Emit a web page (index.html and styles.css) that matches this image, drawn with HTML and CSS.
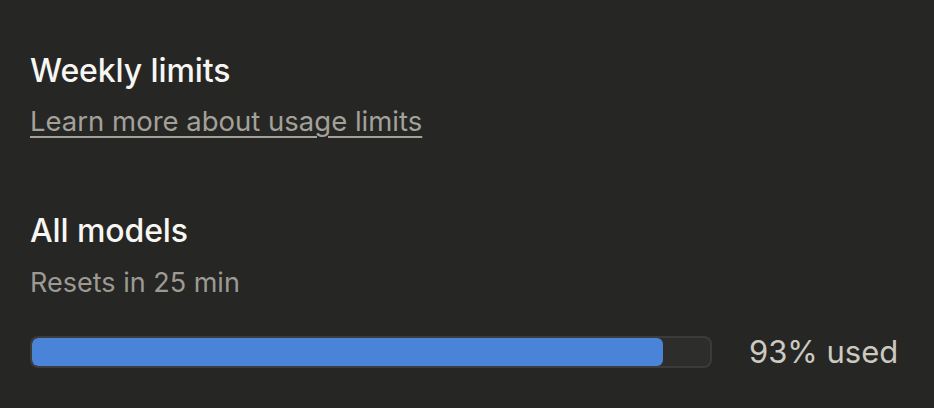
FILE: index.html
```html
<!DOCTYPE html>
<html>
<head>
<meta charset="utf-8">
<link rel="stylesheet" href="styles.css">
</head>
<body>
<main class="panel">
  <section class="section">
    <h2 class="title">Weekly limits</h2>
    <a class="link" href="#">Learn more about usage limits</a>
  </section>
  <section class="section models">
    <h3 class="title">All models</h3>
    <p class="sub">Resets in 25 min</p>
    <div class="usage">
      <div class="track"><div class="fill" style="width:631px"></div></div>
      <span class="pct">93% used</span>
    </div>
  </section>
</main>
</body>
</html>
```
FILE: styles.css
```css
html, body {
  margin: 0;
  padding: 0;
  background: #262624;
  width: 934px;
  height: 408px;
  overflow: hidden;
}
.panel {
  padding: 51px 30px 0 30px;
  font-family: Inter, "Noto Sans", sans-serif;
}
.section { display: flex; flex-direction: column; align-items: flex-start; }
.title {
  margin: 0;
  font-size: 32px;
  font-weight: 500;
  color: #f7f6f2;
  line-height: 40px;
  letter-spacing: -0.1px;
}
.link {
  margin-top: 12px;
  font-size: 27.5px;
  line-height: 36px;
  color: #a3a19a;
  text-decoration: underline;
  text-underline-offset: 5px;
  text-decoration-thickness: 2px;
}
.models { margin-top: 72px; }
.sub {
  margin: 14px 0 0;
  font-size: 27px;
  line-height: 36px;
  color: #9c9a93;
}
.usage {
  margin-top: 32px;
  display: flex;
  align-items: center;
  gap: 37px;
}
.track {
  width: 682px;
  height: 32px;
  box-sizing: border-box;
  border: 2px solid #3b3b39;
  border-radius: 8px;
  background: #2d2d2b;
  overflow: hidden;
  padding: 0;
}
.fill {
  height: 100%;
  background: #4a84d8;
  border-radius: 6px;
}
.pct {
  font-size: 31px;
  color: #cbc9c1;
}
```
